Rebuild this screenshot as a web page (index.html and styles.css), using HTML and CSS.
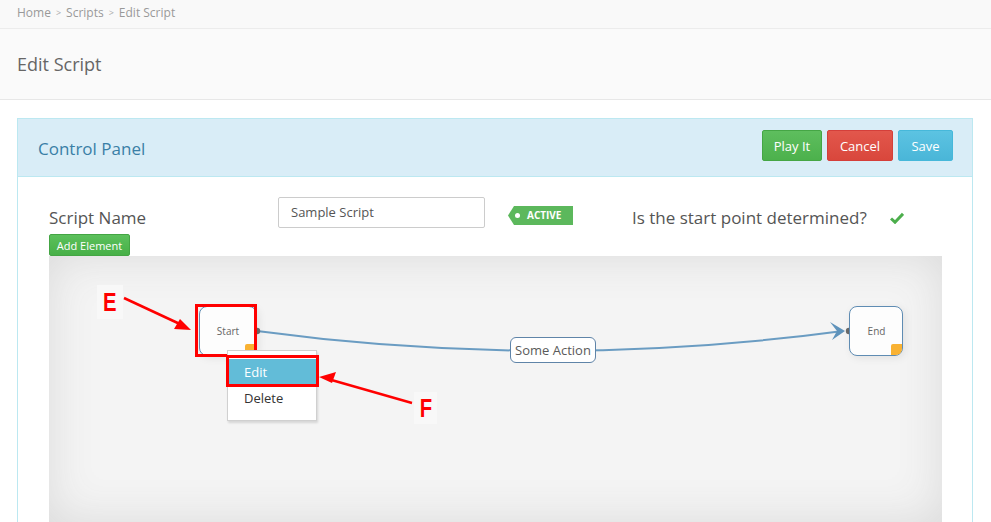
FILE: index.html
```html
<!DOCTYPE html>
<html>
<head>
<meta charset="utf-8">
<link rel="stylesheet" href="styles.css">
</head>
<body>
<div class="crumbs">
  <span>Home</span><span class="sep">&gt;</span><span>Scripts</span><span class="sep">&gt;</span><span>Edit Script</span>
</div>
<div class="page-head">
  <h1>Edit Script</h1>
</div>
<div class="content">
  <div class="panel">
    <div class="panel-heading">
      <h2>Control Panel</h2>
      <div class="actions">
        <button class="btn btn-success">Play It</button>
        <button class="btn btn-danger">Cancel</button>
        <button class="btn btn-info">Save</button>
      </div>
    </div>
    <div class="panel-body">
      <div class="form-row">
        <label class="lbl">Script Name</label>
        <div class="input">Sample Script</div>
        <span class="tag">ACTIVE</span>
        <span class="question">Is the start point determined?</span>
        <svg class="check" width="14" height="12" viewBox="0 0 14 12"><path d="M1 6.5 L5 10.2 L13 1.8" fill="none" stroke="#4cae4c" stroke-width="3"/></svg>
      </div>
      <button class="btn-add">Add Element</button>
      <div class="canvas">
        <svg class="wires" width="893" height="266" viewBox="0 0 893 266">
          <path d="M208 75 C 400 101 600 101 794 75" fill="none" stroke="#6a9cc2" stroke-width="2"/>
          <path d="M796 75 L781 66 L788 75 L783 84 Z" fill="#5f93bb"/>
          <circle cx="208" cy="75" r="3.2" fill="#6b6b6b"/>
          <circle cx="800" cy="75" r="3.2" fill="#6b6b6b"/>
          <g class="anno">
            <path d="M75 42 L133 69" stroke="#ff0000" stroke-width="2.5"/>
            <path d="M142 74 L125 73 L131 63 Z" fill="#ff0000"/>
            <path d="M363 147 L279 123" stroke="#ff0000" stroke-width="2.5"/>
            <path d="M270 121 L287 116 L283 127 Z" fill="#ff0000"/>
          </g>
        </svg>
        <div class="node start-node"><span>Start</span><i class="corner"></i></div>
        <div class="node end-node"><span>End</span><i class="corner"></i></div>
        <div class="edge-label">Some Action</div>
        <div class="frame frame-start"></div>
        <ul class="menu">
          <li class="active">Edit</li>
          <li>Delete</li>
        </ul>
        <div class="frame frame-edit"></div>
        <div class="letter letter-e"><span>E</span></div>
        <div class="letter letter-f"><span>F</span></div>
      </div>
    </div>
  </div>
</div>
</body>
</html>
```

FILE: styles.css
```css
html, body {
  margin: 0;
  padding: 0;
  background: #fff;
  font-family: "Open Sans", "Liberation Sans", sans-serif;
  color: #555;
  overflow: hidden;
}
.crumbs {
  height: 29px;
  box-sizing: border-box;
  padding: 5px 17px 0;
  background: #f9f9f9;
  border-bottom: 1px solid #ececec;
  font-size: 12px;
  color: #999;
  display: flex;
  gap: 5px;
  line-height: 16px;
}
.crumbs .sep {
  font-size: 9px;
  color: #aaa;
  margin: 0;
}
.page-head {
  height: 71px;
  box-sizing: border-box;
  background: #fafafa;
  border-bottom: 1px solid #e7e7e7;
  padding: 0 17px;
  display: flex;
  align-items: center;
}
.page-head h1 {
  margin: 0;
  font-size: 18px;
  font-weight: 400;
  color: #666;
  padding-top: 0;
}
.content {
  padding: 18px 18px 0 17px;
}
.panel {
  border: 1px solid #bce8f1;
  border-bottom: none;
  background: #fff;
}
.panel-heading {
  background: #d9edf7;
  border-bottom: 1px solid #bce8f1;
  height: 58px;
  box-sizing: border-box;
  padding: 11px 19px 0 20px;
  display: flex;
  justify-content: space-between;
  align-items: flex-start;
}
.panel-heading h2 {
  margin: 0;
  font-size: 17px;
  font-weight: 400;
  color: #3a7fa6;
  line-height: 38px;
}
.actions {
  display: flex;
  gap: 5px;
}
.btn {
  font-family: inherit;
  font-size: 13px;
  color: #fff;
  height: 31px;
  padding: 0;
  white-space: nowrap;
  border-radius: 2px;
  border: 1px solid transparent;
  cursor: pointer;
}
.btn-success { background: linear-gradient(#5ebe5e, #4cb14c); border-color: #45a645; width: 60px; }
.btn-danger  { background: linear-gradient(#e2574c, #d9473c); border-color: #d43f3a; width: 66px; }
.btn-info    { background: linear-gradient(#5cc3e2, #4ab6d8); border-color: #46b8da; width: 55px; }
.panel-body {
  padding: 20px 30px 0 31px;
}
.form-row {
  display: flex;
  align-items: center;
  height: 31px;
}
.lbl {
  width: 229px;
  font-size: 17px;
  color: #555;
  padding-top: 9px;
}
.input {
  width: 207px;
  height: 31px;
  box-sizing: border-box;
  border: 1px solid #ccc;
  border-radius: 2px;
  padding: 0 12px;
  font-size: 13px;
  line-height: 29px;
  color: #555;
}
.tag {
  margin-left: 23px;
  height: 19px;
  width: 65px;
  box-sizing: border-box;
  background: #5cb85c;
  color: #fff;
  font-size: 10px;
  font-weight: 700;
  line-height: 19px;
  padding-left: 19px;
  clip-path: polygon(6px 0, 100% 0, 100% 100%, 6px 100%, 0 50%);
  position: relative;
  margin-top: 6px;
}
.tag::before {
  content: "";
  position: absolute;
  left: 7px;
  top: 7px;
  width: 5px;
  height: 5px;
  border-radius: 50%;
  background: #fff;
}
.question {
  margin-left: 59px;
  font-size: 17px;
  color: #555;
  padding-top: 9px;
}
.check {
  margin-left: 23px;
  margin-top: 10px;
}
.btn-add {
  display: block;
  margin-top: 6px;
  height: 22px;
  width: 81px;
  padding: 0;
  font-family: inherit;
  font-size: 11px;
  color: #fff;
  background: linear-gradient(#5cc05c, #47b047);
  border: 1px solid #44a544;
  border-radius: 2px;
}
.canvas {
  position: relative;
  width: 893px;
  height: 266px;
  background: #f4f4f4;
  box-shadow: inset 0 0 45px #dadada;
  overflow: hidden;
}
.wires {
  position: absolute;
  left: 0;
  top: 0;
}
.node {
  position: absolute;
  box-sizing: border-box;
  background: #fdfdfd;
  border: 1px solid #5f8cb3;
  border-radius: 8px;
  display: flex;
  align-items: center;
  justify-content: center;
  font-size: 10px;
  color: #666;
  box-shadow: 2px 2px 8px rgba(0,0,0,0.08);
}
.start-node { left: 150px; top: 50px; width: 58px; height: 50px; }
.end-node   { left: 800px; top: 50px; width: 54px; height: 50px; padding-left: 1px; }
.corner {
  position: absolute;
  right: 0;
  bottom: 0;
  width: 11px;
  height: 11px;
  background: #f9b233;
  border-radius: 2px 0 6px 0;
}
.edge-label {
  position: absolute;
  left: 461px;
  top: 81px;
  width: 86px;
  height: 26px;
  box-sizing: border-box;
  border: 1px solid #5f84a8;
  border-radius: 6px;
  background: #fff;
  font-size: 13px;
  color: #5a5a5a;
  text-align: center;
  line-height: 24px;
}
.frame {
  position: absolute;
  border: 3px solid #ff0000;
  box-sizing: border-box;
}
.frame-start { left: 146px; top: 48px; width: 62px; height: 53px; }
.menu {
  position: absolute;
  left: 178px;
  top: 94px;
  width: 90px;
  height: 71px;
  box-sizing: border-box;
  margin: 0;
  padding: 8px 0 0;
  list-style: none;
  background: #fff;
  border: 1px solid #d0d0d0;
  box-shadow: 1px 2px 2px rgba(0,0,0,0.12);
  font-size: 13px;
}
.menu li {
  height: 26px;
  line-height: 26px;
  padding-left: 16px;
  color: #333;
}
.menu li.active {
  background: #62bcd8;
  color: #fff;
}
.frame-edit { left: 177px; top: 99px; width: 93px; height: 32px; }
.letter {
  position: absolute;
  background: #f8f8f8;
  color: #ff0000;
  font-family: "Liberation Sans", Arial, sans-serif;
  font-weight: 700;
  font-size: 26px;
  text-align: center;
}
.letter span {
  display: inline-block;
  transform: scaleX(0.78);
}
.letter-e { left: 48px; top: 29px; width: 26px; height: 34px; line-height: 34px; }
.letter-f { left: 365px; top: 136px; width: 23px; height: 32px; line-height: 32px; }
```
